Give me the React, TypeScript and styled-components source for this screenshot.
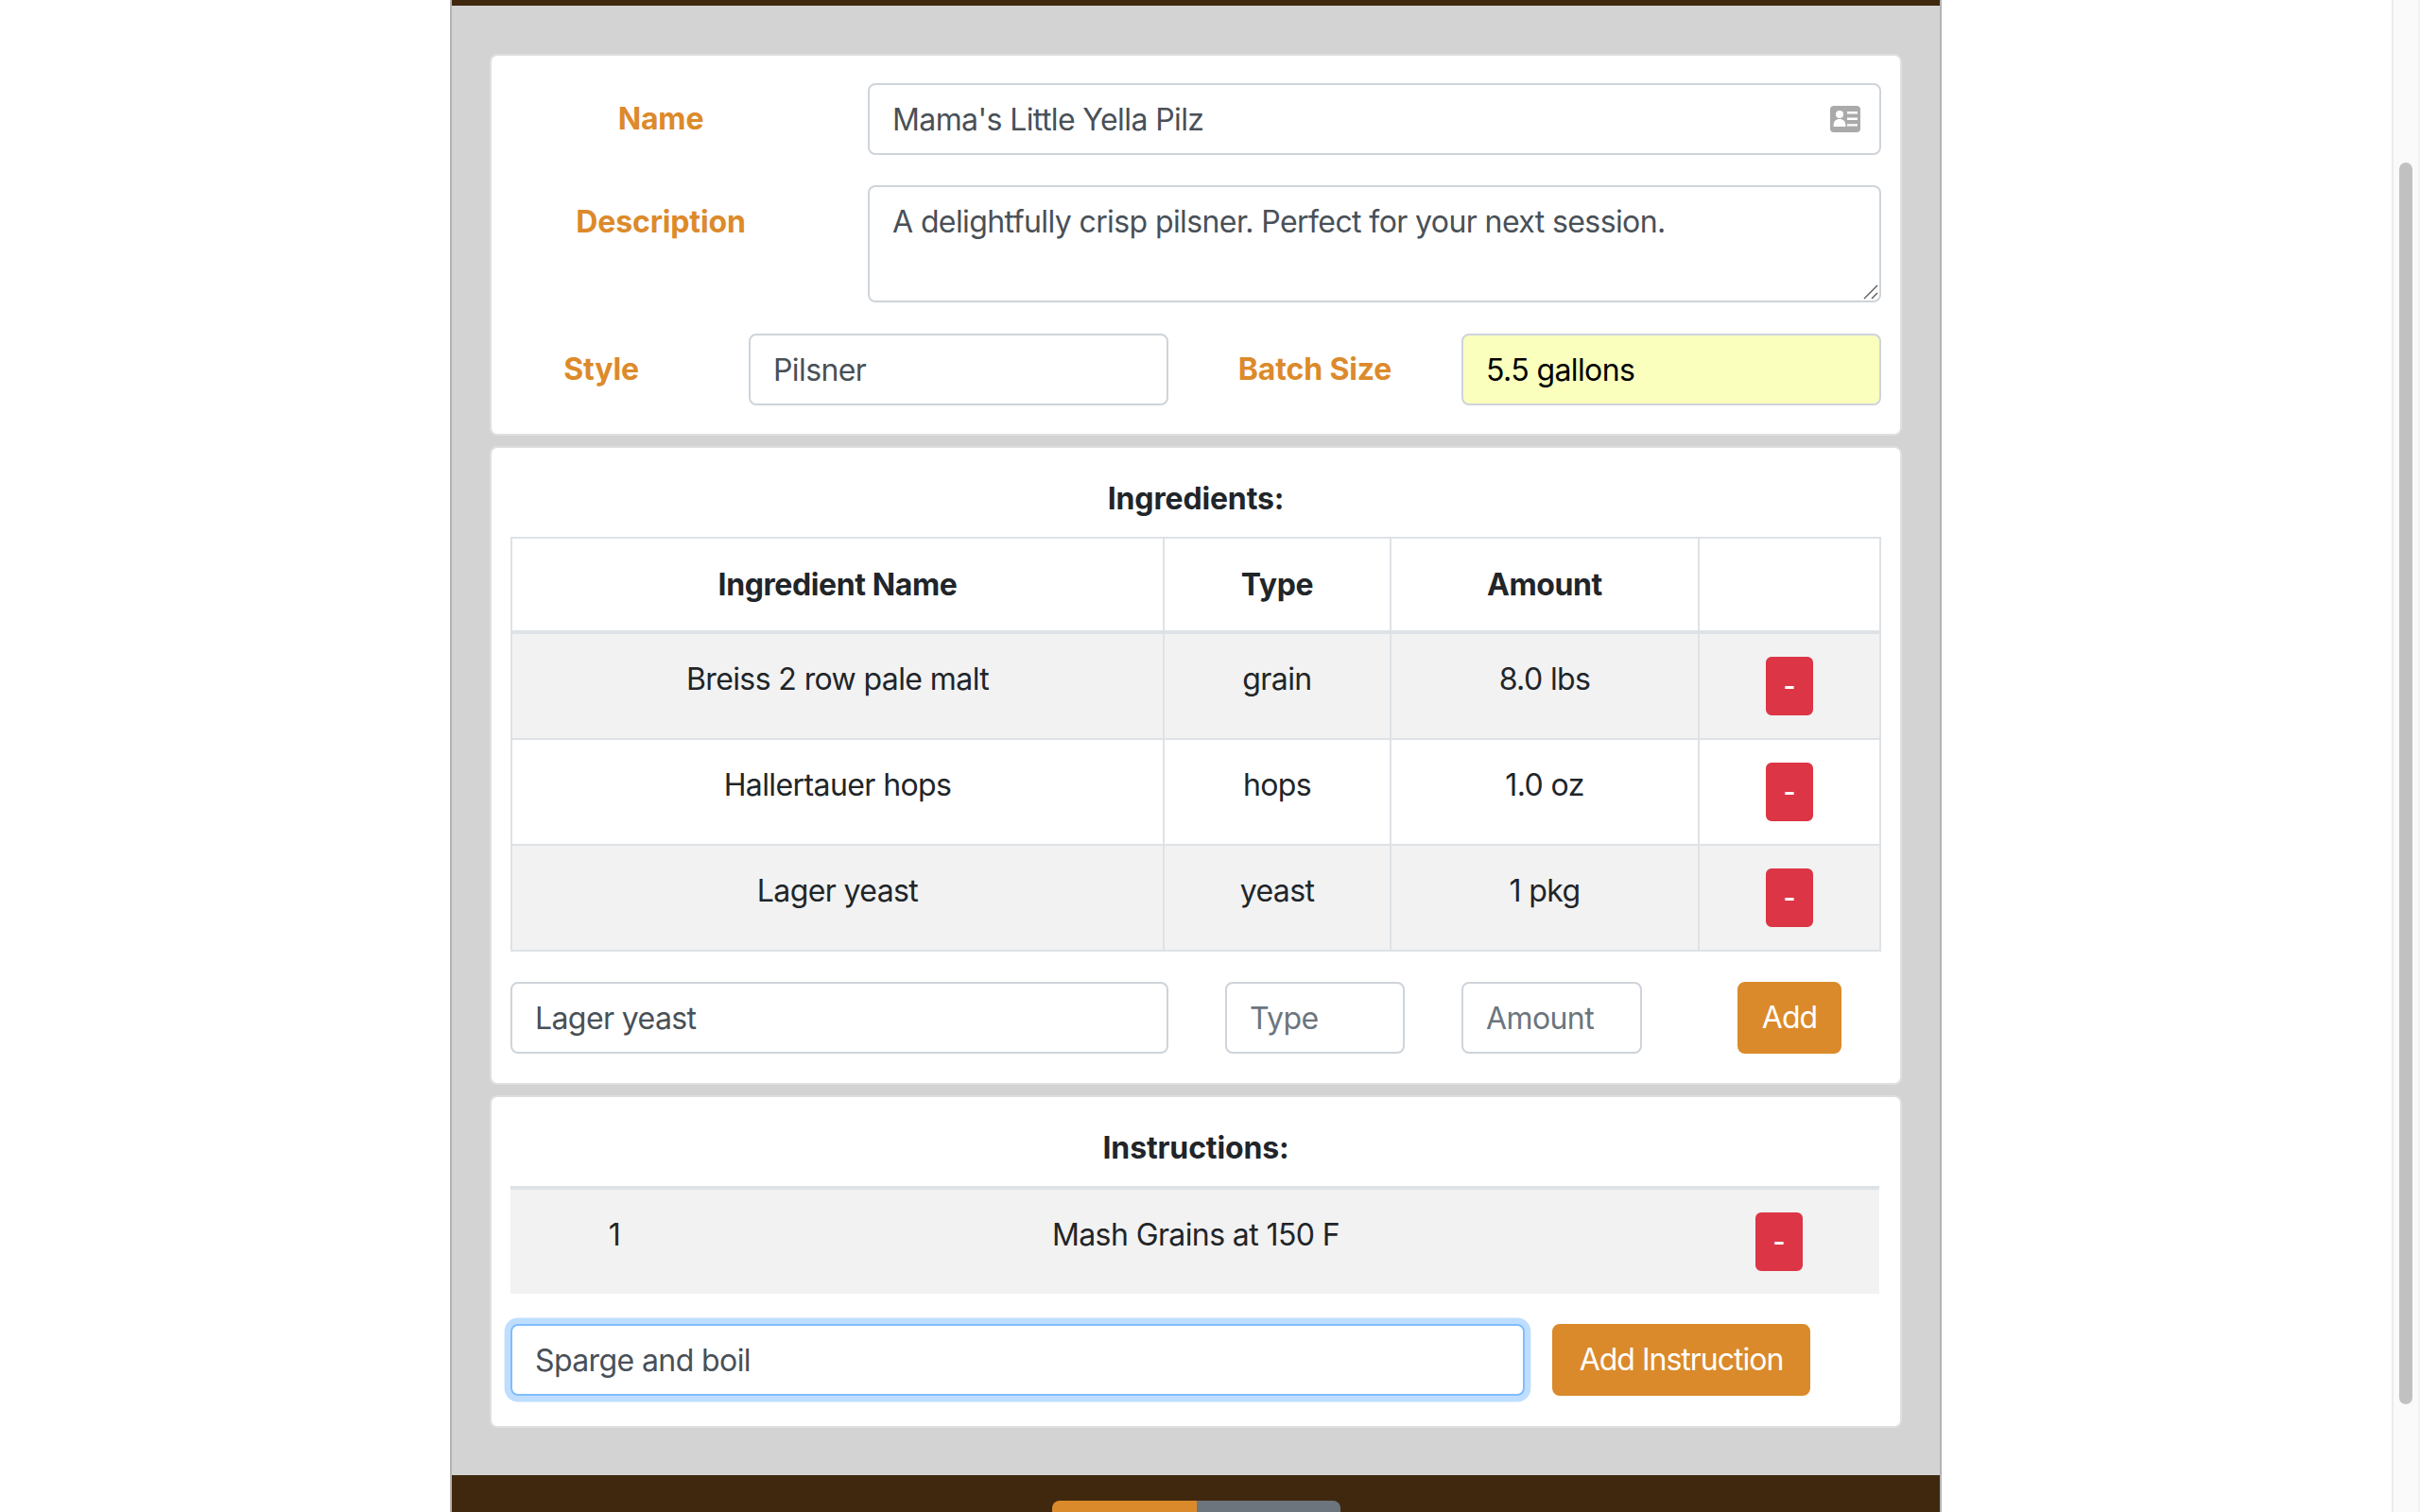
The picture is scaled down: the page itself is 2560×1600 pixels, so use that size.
import React from "react";
import styled, { createGlobalStyle } from "styled-components";

const Global = createGlobalStyle`
  html, body { margin: 0; padding: 0; height: 100%; background: #fff; overflow: hidden; }
  * { box-sizing: border-box; }
  body { font-family: Inter, "Liberation Sans", sans-serif; font-size: 32px; line-height: 48px; color: #212529; letter-spacing: -0.6px; }
`;

const Viewport = styled.div`
  display: flex;
  height: 1600px;
  overflow: hidden;
`;
const PageArea = styled.div`
  flex: 1;
  display: flex;
  justify-content: center;
`;
const Scrollbar = styled.div`
  width: 30px;
  padding: 172px 6px 114px 6px;
  background: #fafafa;
  border-left: 2px solid #ececec;
  border-right: 2px solid #f3f3f3;
  display: flex;
`;
const ScrollThumb = styled.div`
  flex: 1;
  background: #c1c1c1;
  border-radius: 8px;
`;
const Shell = styled.main`
  width: 1578px;
  height: 1600px;
  background: #d3d3d3;
  border-left: 2px solid #b4b4b4;
  border-right: 2px solid #b4b4b4;
  display: flex;
  flex-direction: column;
`;
const TopBar = styled.div`
  height: 6px;
  background: #40280f;
  flex: none;
`;
const Body = styled.div`
  padding: 51px 40px 50px;
  display: flex;
  flex-direction: column;
  gap: 11px;
`;
const Card = styled.section<{ $bottom: number }>`
  background: #fff;
  border: 2px solid #dfdfdf;
  border-radius: 8px;
  padding: 30px 20px ${(p) => p.$bottom}px;
`;
const FirstCard = styled(Card)`
  padding-top: 29px;
`;
const Row = styled.div<{ $top?: number }>`
  display: flex;
  align-items: center;
  gap: 60px;
  margin-top: ${(p) => p.$top ?? 0}px;
`;
const TopRow = styled(Row)`
  align-items: flex-start;
`;
const Label = styled.label<{ $width: number; $pad?: number }>`
  flex: none;
  width: ${(p) => p.$width}px;
  padding-top: ${(p) => p.$pad ?? 0}px;
  color: #dc8a2b;
  font-weight: 700;
  letter-spacing: -0.15px;
  text-align: center;
`;
const FieldWrap = styled.div`
  position: relative;
  flex: 1;
  display: flex;
`;
const Input = styled.input<{ $width?: number; $auto?: boolean; $focus?: boolean }>`
  display: block;
  height: 76px;
  width: ${(p) => (p.$width ? `${p.$width}px` : "100%")};
  flex: none;
  padding: 12px 24px;
  font: inherit;
  letter-spacing: inherit;
  color: ${(p) => (p.$auto ? "#000" : "#495057")};
  background: ${(p) => (p.$auto ? "#faffbd" : "#fff")};
  border: 2px solid ${(p) => (p.$focus ? "#80bdff" : "#ced4da")};
  border-radius: 8px;
  box-shadow: ${(p) => (p.$focus ? "0 0 0 6.4px rgba(0,123,255,.25)" : "none")};
  outline: none;
  &::placeholder { color: #6c757d; opacity: 1; }
`;
const TextArea = styled.textarea`
  display: block;
  width: 100%;
  height: 124px;
  padding: 13px 24px 11px;
  font: inherit;
  letter-spacing: inherit;
  color: #495057;
  background: #fff;
  border: 2px solid #ced4da;
  border-radius: 8px;
  outline: none;
  resize: none;
`;
const CardIcon = styled.svg`
  position: absolute;
  top: 24px;
  right: 22px;
  width: 32px;
  height: 28px;
`;
const ResizeGrip = styled.svg`
  position: absolute;
  right: 3px;
  bottom: 3px;
  width: 16px;
  height: 16px;
  pointer-events: none;
`;
const Heading = styled.h2`
  margin: 0 0 16px;
  font-size: 32px;
  line-height: 48px;
  font-weight: 700;
  letter-spacing: -0.15px;
  text-align: center;
`;
const Table = styled.table`
  width: 1448px;
  table-layout: fixed;
  border-collapse: collapse;
`;
const HeadCell = styled.th`
  padding: 24px;
  height: 100px;
  font-weight: 700;
  letter-spacing: -0.4px;
  text-align: center;
  vertical-align: middle;
  border: 2px solid #dee2e6;
  border-bottom-width: 4px;
`;
const BodyRow = styled.tr<{ $striped?: boolean }>`
  background: ${(p) => (p.$striped ? "#f2f2f2" : "#fff")};
`;
const Cell = styled.td`
  height: 112px;
  padding: 24px;
  text-align: center;
  vertical-align: top;
  border: 2px solid #dee2e6;
`;
const StepTable = styled(Table)`
  border-top: 4px solid #dee2e6;
`;
const StepCell = styled.td`
  height: 110px;
  padding: 24px;
  text-align: center;
  vertical-align: top;
`;
const StepActionCell = styled(StepCell)`
  padding-left: 27px;
  padding-right: 21px;
`;
const RemoveButton = styled.button`
  display: inline-block;
  vertical-align: top;
  width: 50px;
  height: 62px;
  padding: 0;
  border: 2px solid #dc3545;
  border-radius: 6px;
  background: #dc3545;
  color: #fff;
  font: inherit;
  font-size: 28px;
  font-weight: 600;
  line-height: 42px;
`;
const Action = styled.button<{ $width: number; $left?: number }>`
  flex: none;
  width: ${(p) => p.$width}px;
  height: 76px;
  margin-left: ${(p) => p.$left ?? 0}px;
  border: 2px solid #da8a2a;
  border-radius: 8px;
  background: #da8a2a;
  color: #fff;
  font: inherit;
  letter-spacing: -1px;
  padding: 0;
`;
const Footer = styled.footer`
  flex: 1;
  background: #40280f;
  padding-top: 27px;
  display: flex;
  justify-content: center;
`;
const Segment = styled.div<{ $color: string; $side: "left" | "right"; $width: number }>`
  width: ${(p) => p.$width}px;
  height: 76px;
  background: ${(p) => p.$color};
  border-radius: ${(p) => (p.$side === "left" ? "8px 0 0 8px" : "0 8px 8px 0")};
`;

const AddressIcon = () => (
  <CardIcon viewBox="0 0 32 28" aria-hidden="true">
    <rect x="0" y="0" width="32" height="28" rx="4" fill="#aaaaaa" />
    <circle cx="10" cy="9" r="4" fill="#fff" />
    <path d="M3.5 22c0-6 2.6-8 6.5-8s6.5 2 6.5 8z" fill="#fff" />
    <path d="M18 6h11v2.4H18zM18 12.6h11V15H18zM18 19.2h11v2.4H18z" fill="#fff" />
  </CardIcon>
);

const ingredients = [
  ["Breiss 2 row pale malt", "grain", "8.0 lbs"],
  ["Hallertauer hops", "hops", "1.0 oz"],
  ["Lager yeast", "yeast", "1 pkg"],
];

export default function App() {
  return (
    <Viewport>
      <Global />
      <PageArea>
        <Shell>
          <TopBar />
          <Body>
            <FirstCard $bottom={30}>
              <Row>
                <Label $width={318}>Name</Label>
                <FieldWrap>
                  <Input defaultValue="Mama's Little Yella Pilz" />
                  <AddressIcon />
                </FieldWrap>
              </Row>
              <TopRow $top={32}>
                <Label $width={318} $pad={15}>Description</Label>
                <FieldWrap>
                  <TextArea defaultValue="A delightfully crisp pilsner. Perfect for your next session." />
                  <ResizeGrip viewBox="0 0 16 16" aria-hidden="true">
                    <path d="M1 15 15 1M9 15l6-6" stroke="#5a5a5a" strokeWidth="1.4" fill="none" />
                  </ResizeGrip>
                </FieldWrap>
              </TopRow>
              <Row $top={33}>
                <Label $width={192}>Style</Label>
                <Input $width={444} defaultValue="Pilsner" />
                <Label $width={190}>Batch Size</Label>
                <Input $width={444} $auto defaultValue="5.5 gallons" />
              </Row>
            </FirstCard>
            <Card $bottom={31}>
              <Heading>Ingredients:</Heading>
              <Table>
                <colgroup>
                  <col width={690} />
                  <col width={240} />
                  <col width={326} />
                  <col width={192} />
                </colgroup>
                <thead>
                  <tr>
                    <HeadCell>Ingredient Name</HeadCell>
                    <HeadCell>Type</HeadCell>
                    <HeadCell>Amount</HeadCell>
                    <HeadCell />
                  </tr>
                </thead>
                <tbody>
                  {ingredients.map(([name, type, amount], i) => (
                    <BodyRow key={name} $striped={i % 2 === 0}>
                      <Cell>{name}</Cell>
                      <Cell>{type}</Cell>
                      <Cell>{amount}</Cell>
                      <Cell><RemoveButton>-</RemoveButton></Cell>
                    </BodyRow>
                  ))}
                </tbody>
              </Table>
              <Row $top={32}>
                <Input $width={696} defaultValue="Lager yeast" />
                <Input $width={190} placeholder="Type" />
                <Input $width={191} placeholder="Amount" />
                <Action $width={110} $left={41}>Add</Action>
              </Row>
            </Card>
            <Card $bottom={32}>
              <Heading>Instructions:</Heading>
              <StepTable>
                <colgroup>
                  <col width={220} />
                  <col width={1010} />
                  <col width={218} />
                </colgroup>
                <tbody>
                  <BodyRow $striped>
                    <StepCell>1</StepCell>
                    <StepCell>Mash Grains at 150 F</StepCell>
                    <StepActionCell><RemoveButton>-</RemoveButton></StepActionCell>
                  </BodyRow>
                </tbody>
              </StepTable>
              <Row $top={32}>
                <Input $width={1073} $focus defaultValue="Sparge and boil" />
                <Action $width={273} $left={-31}>Add Instruction</Action>
              </Row>
            </Card>
          </Body>
          <Footer>
            <Segment $color="#da8a2a" $side="left" $width={153} />
            <Segment $color="#6c757d" $side="right" $width={152} />
          </Footer>
        </Shell>
      </PageArea>
      <Scrollbar>
        <ScrollThumb />
      </Scrollbar>
    </Viewport>
  );
}
